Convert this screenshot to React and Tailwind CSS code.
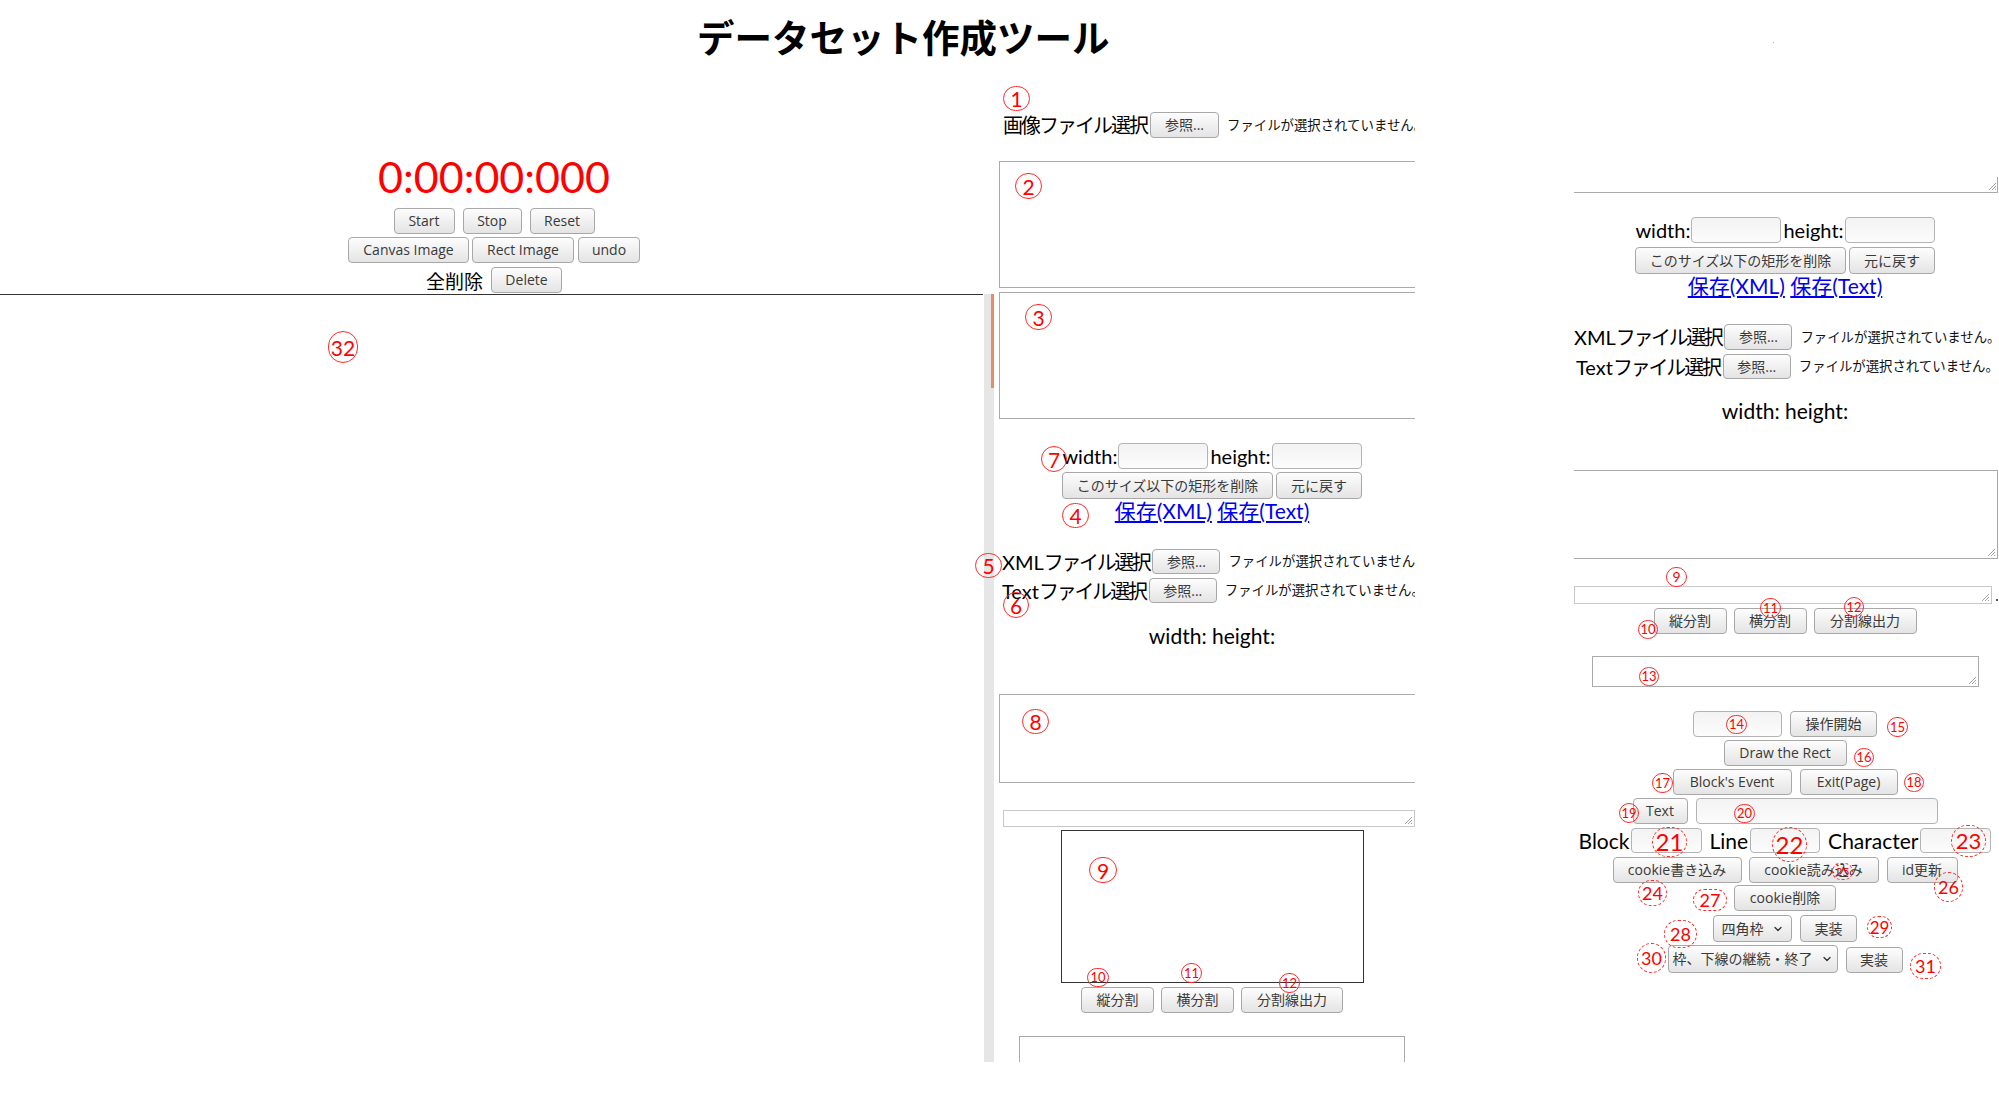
import React from "react";
import { ChevronDown } from "lucide-react";

const BF = "font-['Open_Sans','Noto_Sans_CJK_JP',sans-serif]";

function Btn({ w, h = "h-[26px]", cls = "", children }) {
  return (
    <div
      className={`${w} ${h} ${cls} ${BF} flex shrink-0 items-center justify-center whitespace-nowrap rounded-[4px] border border-[#a8a8a8] bg-linear-to-b from-[#fdfdfd] to-[#e4e4e4] text-[14px] leading-none text-[#3a3a3a]`}
    >
      {children}
    </div>
  );
}

function Sel({ w, h, children }) {
  return (
    <div
      className={`${w} ${h} ${BF} flex shrink-0 items-center justify-center gap-[8px] whitespace-nowrap rounded-[4px] border border-[#a8a8a8] bg-linear-to-b from-[#fdfdfd] to-[#e4e4e4] text-[14px] leading-none text-[#3a3a3a]`}
    >
      <span>{children}</span>
      <ChevronDown size={12} strokeWidth={2.6} className="text-[#333]" />
    </div>
  );
}

function Inp({ w, h = "h-[26px]", cls = "" }) {
  return (
    <div
      className={`${w} ${h} ${cls} shrink-0 rounded-[4px] border border-[#b3b3b3] bg-linear-to-b from-[#f3f3f3] to-[#fcfcfc]`}
    />
  );
}

function Grip() {
  return (
    <svg className="absolute bottom-[1px] right-[1px]" width="10" height="10" viewBox="0 0 10 10">
      <path d="M9 2L2 9M9 5L5 9M9 8L8 9" stroke="#a3a3a3" strokeWidth="1" fill="none" />
    </svg>
  );
}

function Ann({ n, c, d }) {
  return (
    <div
      className={`${c} ${d ? "border-dashed" : "border-solid"} absolute flex items-center justify-center rounded-full border border-[#ff2a2a] font-['Lato',sans-serif] leading-none text-[#ff0000]`}
    >
      {n}
    </div>
  );
}

const anns = [
  { n: "1", c: "left-[1003px] top-[86px] w-[27px] h-[25px] text-[21px]" },
  { n: "2", c: "left-[1015px] top-[173px] w-[27px] h-[26px] text-[21px]" },
  { n: "3", c: "left-[1025px] top-[304px] w-[27px] h-[26px] text-[21px]" },
  { n: "4", c: "left-[1062px] top-[503px] w-[27px] h-[25px] text-[21px]" },
  { n: "5", c: "left-[975px] top-[553px] w-[27px] h-[25px] text-[21px]" },
  { n: "6", c: "left-[1003px] top-[592px] w-[26px] h-[26px] text-[21px]" },
  { n: "7", c: "left-[1041px] top-[446px] w-[26px] h-[26px] text-[21px]" },
  { n: "8", c: "left-[1022px] top-[709px] w-[27px] h-[25px] text-[21px]" },
  { n: "9", c: "left-[1089px] top-[857px] w-[28px] h-[26px] text-[21px]" },
  { n: "10", c: "left-[1087px] top-[968px] w-[22px] h-[19px] text-[13px]" },
  { n: "11", c: "left-[1181px] top-[963px] w-[21px] h-[20px] text-[13px]" },
  { n: "12", c: "left-[1279px] top-[973px] w-[21px] h-[20px] text-[13px]" },
  { n: "32", c: "left-[328px] top-[331px] w-[30px] h-[32px] text-[21px]" },
  { n: "9", c: "left-[1666px] top-[567px] w-[21px] h-[20px] text-[14px]" },
  { n: "10", c: "left-[1638px] top-[620px] w-[20px] h-[19px] text-[13px]" },
  { n: "11", c: "left-[1760px] top-[598px] w-[21px] h-[20px] text-[13px]" },
  { n: "12", c: "left-[1844px] top-[597px] w-[20px] h-[20px] text-[13px]" },
  { n: "13", c: "left-[1639px] top-[667px] w-[20px] h-[19px] text-[13px]" },
  { n: "14", c: "left-[1726px] top-[715px] w-[21px] h-[19px] text-[13px]" },
  { n: "15", c: "left-[1887px] top-[717px] w-[21px] h-[20px] text-[13px]" },
  { n: "16", c: "left-[1854px] top-[748px] w-[20px] h-[19px] text-[13px]" },
  { n: "17", c: "left-[1652px] top-[773px] w-[21px] h-[20px] text-[13px]" },
  { n: "18", c: "left-[1904px] top-[773px] w-[20px] h-[19px] text-[13px]" },
  { n: "19", c: "left-[1619px] top-[803px] w-[20px] h-[20px] text-[13px]" },
  { n: "20", c: "left-[1734px] top-[804px] w-[21px] h-[19px] text-[13px]" },
  { n: "21", c: "left-[1652px] top-[827px] w-[35px] h-[30px] text-[24px]", d: true },
  { n: "22", c: "left-[1772px] top-[827px] w-[35px] h-[35px] text-[24px]", d: true },
  { n: "23", c: "left-[1951px] top-[825px] w-[35px] h-[32px] text-[22px]", d: true },
  { n: "24", c: "left-[1638px] top-[880px] w-[29px] h-[26px] text-[18px]", d: true },
  { n: "25", c: "left-[1832px] top-[863px] w-[21px] h-[17px] text-[12px]", d: true },
  { n: "26", c: "left-[1934px] top-[872px] w-[29px] h-[30px] text-[18px]", d: true },
  { n: "27", c: "left-[1693px] top-[889px] w-[34px] h-[22px] text-[18px]", d: true },
  { n: "28", c: "left-[1664px] top-[920px] w-[33px] h-[28px] text-[18px]", d: true },
  { n: "29", c: "left-[1867px] top-[916px] w-[25px] h-[22px] text-[17px]", d: true },
  { n: "30", c: "left-[1637px] top-[943px] w-[29px] h-[30px] text-[18px]", d: true },
  { n: "31", c: "left-[1910px] top-[953px] w-[31px] h-[26px] text-[18px]", d: true },
];

function FileRow({ mt, pl, h, label }) {
  return (
    <div className={`${mt} ${pl} ${h} flex items-center whitespace-nowrap text-[20px] text-black`}>
      <span>{label}</span>
      <Btn w="w-[68px]" h={h} cls="ml-[3px]">
        参照...
      </Btn>
      <span className="ml-[8px] text-[13.4px] text-[#111]">ファイルが選択されていません。</span>
    </div>
  );
}

function SizeRows({ mtSize, mtBtn }) {
  return (
    <>
      <div className={`${mtSize} flex h-[26px] items-center justify-center whitespace-nowrap text-[20px] text-black`}>
        <span>width:</span>
        <Inp w="w-[90px]" cls="ml-[1px]" />
        <span className="ml-[2px]">height:</span>
        <Inp w="w-[90px]" cls="ml-[1px]" />
      </div>
      <div className={`${mtBtn} flex justify-center gap-[3px]`}>
        <Btn w="w-[211px]" h="h-[27px]">
          このサイズ以下の矩形を削除
        </Btn>
        <Btn w="w-[86px]" h="h-[27px]">
          元に戻す
        </Btn>
      </div>
      <div className="h-[24px] whitespace-nowrap text-center text-[21px] leading-[24px]">
        <a className="text-[#0000ee] underline">保存(XML)</a>{" "}
        <a className="text-[#0000ee] underline">保存(Text)</a>
      </div>
    </>
  );
}

const xmlLabel = (
  <>
    XML<span className="tracking-[-2.4px]">ファイル選択</span>
  </>
);
const textLabel = (
  <>
    Text<span className="tracking-[-2.2px]">ファイル選択</span>
  </>
);

function Middle() {
  return (
    <div className="ml-[5px] flex w-[426px] shrink-0 flex-col">
      <div className="mt-[48px] flex h-[26px] items-center whitespace-nowrap pl-[4px] text-[20px] text-black">
        <span className="tracking-[-2px]">画像ファイル選択</span>
        <Btn w="w-[69px]" cls="ml-[3px]">
          参照...
        </Btn>
        <span className="ml-[8px] text-[13.4px] text-[#111]">ファイルが選択されていません。</span>
      </div>
      <div className="mt-[23px] h-[127px] border border-[#aaaaaa]" />
      <div className="mt-[4px] h-[127px] border border-[#aaaaaa]" />
      <SizeRows mtSize="mt-[24px]" mtBtn="mt-[3px]" />
      <FileRow mt="mt-[26px]" pl="pl-[3px]" h="h-[25px]" label={xmlLabel} />
      <FileRow mt="mt-[4px]" pl="pl-[3px]" h="h-[25px]" label={textLabel} />
      <div className="mt-[21px] h-[24px] text-center text-[21px] leading-[24px]">width: height:</div>
      <div className="relative mt-[46px] h-[89px] border border-[#aaaaaa]" />
      <div className="relative ml-[4px] mt-[27px] h-[17px] w-[412px] border border-[#c9c9c9]">
        <Grip />
      </div>
      <div className="mx-auto mt-[3px] h-[153px] w-[303px] border border-[#333333]" />
      <div className="mt-[4px] flex justify-center gap-[7px]">
        <Btn w="w-[73px]">縦分割</Btn>
        <Btn w="w-[73px]">横分割</Btn>
        <Btn w="w-[102px]">分割線出力</Btn>
      </div>
      <div className="relative mx-auto mt-[23px] h-[31px] w-[386px] shrink-0 border border-[#aaaaaa]" />
    </div>
  );
}

function Right() {
  return (
    <div className="ml-[159px] h-[1099px] w-[425px] shrink-0 overflow-hidden">
      <div className="-ml-[2px] flex w-[426px] flex-col">
        <div className="relative h-[193px] border-b border-[#aaaaaa]">
          <div className="absolute bottom-0 right-0 h-[15px] w-px bg-[#aaaaaa]" />
          <Grip />
        </div>
        <SizeRows mtSize="mt-[24px]" mtBtn="mt-[4px]" />
        <FileRow mt="mt-[26px]" pl="pl-[2px]" h="h-[26px]" label={xmlLabel} />
        <FileRow mt="mt-[4px]" pl="pl-[4px]" h="h-[25px]" label={textLabel} />
        <div className="mt-[20px] h-[24px] text-center text-[21px] leading-[24px]">width: height:</div>
        <div className="relative mt-[47px] h-[89px] border border-[#aaaaaa]">
          <Grip />
        </div>
        <div className="relative ml-[2px] mt-[27px] h-[18px] w-[418px] border border-[#c9c9c9]">
          <Grip />
        </div>
        <div className="mt-[4px] flex justify-center gap-[7px]">
          <Btn w="w-[73px]">縦分割</Btn>
          <Btn w="w-[73px]">横分割</Btn>
          <Btn w="w-[103px]">分割線出力</Btn>
        </div>
        <div className="relative mx-auto mt-[22px] h-[31px] w-[387px] border border-[#aaaaaa]">
          <Grip />
        </div>
        <div className="mt-[24px] flex justify-center gap-[8px]">
          <Inp w="w-[89px]" />
          <Btn w="w-[87px]">操作開始</Btn>
        </div>
        <div className="mt-[3px] flex justify-center">
          <Btn w="w-[123px]">Draw the Rect</Btn>
        </div>
        <div className="mt-[3px] flex justify-center gap-[8px]">
          <Btn w="w-[119px]">Block's Event</Btn>
          <Btn w="w-[98px]">Exit(Page)</Btn>
        </div>
        <div className="mt-[3px] flex justify-center gap-[8px]">
          <Btn w="w-[55px]">Text</Btn>
          <Inp w="w-[242px]" />
        </div>
        <div className="mt-[4px] flex h-[25px] items-center justify-center whitespace-nowrap text-[21px] text-black">
          <span>Block</span>
          <Inp w="w-[71px]" h="h-[25px]" cls="ml-[2px]" />
          <span className="ml-[7px]">Line</span>
          <Inp w="w-[70px]" h="h-[25px]" cls="ml-[2px]" />
          <span className="ml-[8px]">Character</span>
          <Inp w="w-[71px]" h="h-[25px]" cls="ml-[2px]" />
        </div>
        <div className="mt-[4px] flex justify-center gap-[7px]">
          <Btn w="w-[129px]">cookie書き込み</Btn>
          <Btn w="w-[130px]">cookie読み込み</Btn>
          <Btn w="w-[71px]" cls="ml-[1px]">
            id更新
          </Btn>
        </div>
        <div className="mt-[2px] flex justify-center">
          <Btn w="w-[102px]">cookie削除</Btn>
        </div>
        <div className="mt-[4px] flex justify-center gap-[8px]">
          <Sel w="w-[79px]" h="h-[27px]">
            四角枠
          </Sel>
          <Btn w="w-[57px]" h="h-[27px]">
            実装
          </Btn>
        </div>
        <div className="mt-[3px] flex justify-center gap-[8px]">
          <Sel w="w-[170px]" h="h-[28px]">
            枠、下線の継続・終了
          </Sel>
          <Btn w="w-[57px]" h="h-[26px]" cls="mt-[2px]">
            実装
          </Btn>
        </div>
      </div>
    </div>
  );
}

export default function App() {
  return (
    <div className="relative flex h-[1099px] w-[1999px] overflow-hidden bg-white font-['Lato','Noto_Sans_CJK_JP',sans-serif] text-black">
      <div className="flex h-[1062px] w-[1415px] shrink-0 flex-col overflow-hidden">
        <div className="h-[64px] shrink-0 whitespace-nowrap pl-[697px] pt-[12px] font-['Noto_Sans_CJK_JP',sans-serif] text-[37.5px] font-bold leading-[48px]">
          データセット作成ツール
        </div>
        <div className="flex items-start">
          <div className="flex w-[994px] shrink-0 flex-col">
            <div className="flex w-[988px] flex-col items-center">
              <div className="mt-[89px] h-[48px] text-[43px] leading-[48px] text-[#ff0000]">0:00:00:000</div>
              <div className="mt-[7px] flex gap-[8px]">
                <Btn w="w-[61px]">Start</Btn>
                <Btn w="w-[59px]">Stop</Btn>
                <Btn w="w-[65px]">Reset</Btn>
              </div>
              <div className="mt-[3px] flex gap-[3px]">
                <Btn w="w-[121px]">Canvas Image</Btn>
                <Btn w="w-[102px]">Rect Image</Btn>
                <Btn w="w-[62px]" cls="ml-[1px]">
                  undo
                </Btn>
              </div>
              <div className="mt-[4px] flex items-center gap-[8px]">
                <span className="font-['Noto_Sans_CJK_JP',sans-serif] text-[19px] leading-none">全削除</span>
                <Btn w="w-[71px]">Delete</Btn>
              </div>
            </div>
            <div className="mt-[1px] flex h-[768px]">
              <div className="w-[983px] border-t border-[#333333]" />
              <div className="ml-[1px] flex w-[10px] items-start justify-end bg-[#e6e6e6]">
                <div className="h-[94px] w-[3px] bg-[#e98c63]" />
              </div>
            </div>
          </div>
          <Middle />
        </div>
      </div>
      <Right />
      <div className="absolute left-[1773px] top-[42px] h-px w-px bg-[#aaaaaa]" />
      <div className="absolute left-[1996px] top-[599px] h-[2px] w-[2px] bg-[#555555]" />
      {anns.map((a, i) => (
        <Ann key={i} {...a} />
      ))}
    </div>
  );
}
